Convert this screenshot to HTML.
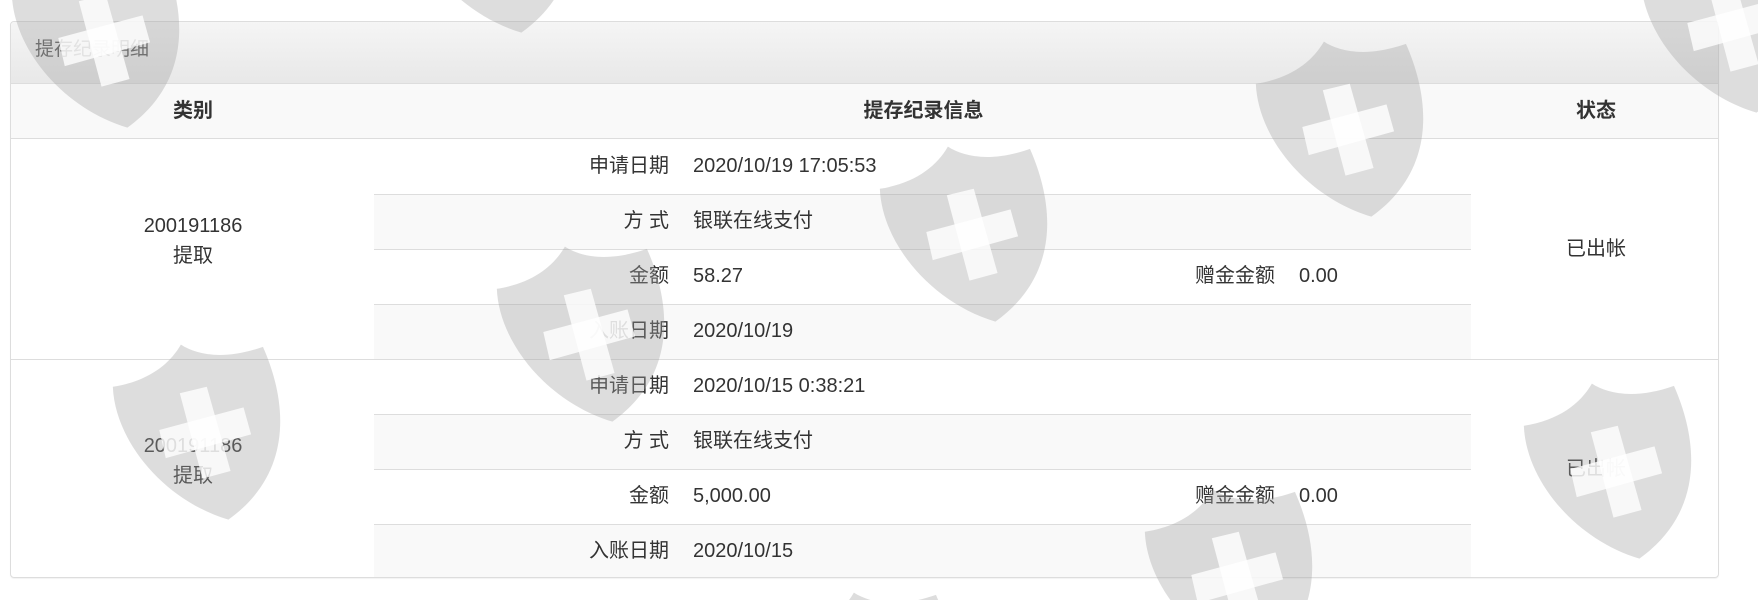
<!DOCTYPE html>
<html><head><meta charset="utf-8"><style>
*{margin:0;padding:0;box-sizing:border-box}
html,body{width:1758px;height:600px;overflow:hidden}
body{background:#fff;position:relative;font-family:"Liberation Sans","Noto Sans CJK SC",sans-serif;color:#333;font-size:20px}
.panel{position:absolute;left:10px;top:21px;width:1709px;height:557px;border:1px solid #ddd;border-radius:4px;overflow:hidden;box-shadow:0 1px 1px rgba(0,0,0,.05)}
.head{position:absolute;left:0;top:0;width:100%;height:62px;background:linear-gradient(#f5f5f5,#e8e8e8);border-bottom:1px solid #ddd;color:#555;font-size:19px;line-height:56px;padding-left:24px}
.abs{position:absolute;white-space:nowrap}
.hr{position:absolute;height:1px;background:#ddd}
.stripe{position:absolute;left:363px;width:1097px;height:55px;background:#f9f9f9}
.c{text-align:center}
.r{text-align:right}
</style></head><body>
<div class="panel">
 <div class="head">提存纪录明细</div>
 <div class="abs" style="left:0;top:62px;width:1707px;height:55px;background:#f9f9f9;border-bottom:1px solid #ddd"></div>
 <div class="abs c" style="left:0;top:62px;width:364px;line-height:55px;font-weight:bold">类别</div>
 <div class="abs c" style="left:364px;top:62px;width:1097px;line-height:55px;font-weight:bold">提存纪录信息</div>
 <div class="abs c" style="left:1461px;top:62px;width:248px;line-height:55px;font-weight:bold">状态</div>

 <div class="stripe" style="top:172px"></div>
 <div class="stripe" style="top:282px"></div>
 <div class="hr" style="left:363px;width:1097px;top:172px"></div>
 <div class="hr" style="left:363px;width:1097px;top:227px"></div>
 <div class="hr" style="left:363px;width:1097px;top:282px"></div>
 <div class="hr" style="left:0;width:1709px;top:337px"></div>
 <div class="abs c" style="left:0;top:189px;width:364px;line-height:30px">200191186<br>提取</div>
 <div class="abs c" style="left:1461px;top:212px;width:248px;line-height:30px">已出帐</div>
 <div class="abs r" style="left:400px;width:258px;top:117px;line-height:55px">申请日期</div>
 <div class="abs" style="left:682px;top:117px;line-height:55px">2020/10/19 17:05:53</div>
 <div class="abs r" style="left:400px;width:258px;top:172px;line-height:55px">方 式</div>
 <div class="abs" style="left:682px;top:172px;line-height:55px">银联在线支付</div>
 <div class="abs r" style="left:400px;width:258px;top:227px;line-height:55px">金额</div>
 <div class="abs" style="left:682px;top:227px;line-height:55px">58.27</div>
 <div class="abs r" style="left:1064px;width:200px;top:227px;line-height:55px">赠金金额</div>
 <div class="abs" style="left:1288px;top:227px;line-height:55px">0.00</div>
 <div class="abs r" style="left:400px;width:258px;top:282px;line-height:55px">入账日期</div>
 <div class="abs" style="left:682px;top:282px;line-height:55px">2020/10/19</div>

 <div class="stripe" style="top:392px"></div>
 <div class="stripe" style="top:502px"></div>
 <div class="hr" style="left:363px;width:1097px;top:392px"></div>
 <div class="hr" style="left:363px;width:1097px;top:447px"></div>
 <div class="hr" style="left:363px;width:1097px;top:502px"></div>
 <div class="abs c" style="left:0;top:409px;width:364px;line-height:30px">200191186<br>提取</div>
 <div class="abs c" style="left:1461px;top:432px;width:248px;line-height:30px">已出帐</div>
 <div class="abs r" style="left:400px;width:258px;top:337px;line-height:55px">申请日期</div>
 <div class="abs" style="left:682px;top:337px;line-height:55px">2020/10/15 0:38:21</div>
 <div class="abs r" style="left:400px;width:258px;top:392px;line-height:55px">方 式</div>
 <div class="abs" style="left:682px;top:392px;line-height:55px">银联在线支付</div>
 <div class="abs r" style="left:400px;width:258px;top:447px;line-height:55px">金额</div>
 <div class="abs" style="left:682px;top:447px;line-height:55px">5,000.00</div>
 <div class="abs r" style="left:1064px;width:200px;top:447px;line-height:55px">赠金金额</div>
 <div class="abs" style="left:1288px;top:447px;line-height:55px">0.00</div>
 <div class="abs r" style="left:400px;width:258px;top:502px;line-height:55px">入账日期</div>
 <div class="abs" style="left:682px;top:502px;line-height:55px">2020/10/15</div>
</div>

<svg width="1758" height="600" style="position:absolute;left:0;top:0" viewBox="0 0 1758 600">
<defs>
<g id="s0">
 <path d="M23,60 C55,55 75,40 86,21 C100,30 125,36 162,23 C185,75 190,140 130,183 C70,165 25,110 23,60 Z" fill="#a0a0a0" fill-opacity="0.36"/>
 <polygon points="85,66 110,60 132,138 106,145" fill="#fff" fill-opacity="0.8"/>
 <polygon points="66,100 144,79 151,104 72,126" fill="#fff" fill-opacity="0.8"/>
</g>
<g id="s" transform="translate(-9,-8) scale(1.08)"><use href="#s0"/></g>
</defs>
<use href="#s" transform="translate(-4,-62)"/>
<use href="#s" transform="translate(481,232)"/>
<use href="#s" transform="translate(97,330)"/>
<use href="#s" transform="translate(1240,27)"/>
<use href="#s" transform="translate(864,132)"/>
<use href="#s" transform="translate(1508,369)"/>
<use href="#s" transform="translate(1129,475)"/>
<use href="#s" transform="translate(1625,-77)"/>
<use href="#s" transform="translate(390,-157)"/>
<use href="#s" transform="translate(770,578)"/>
</svg>
</body></html>
